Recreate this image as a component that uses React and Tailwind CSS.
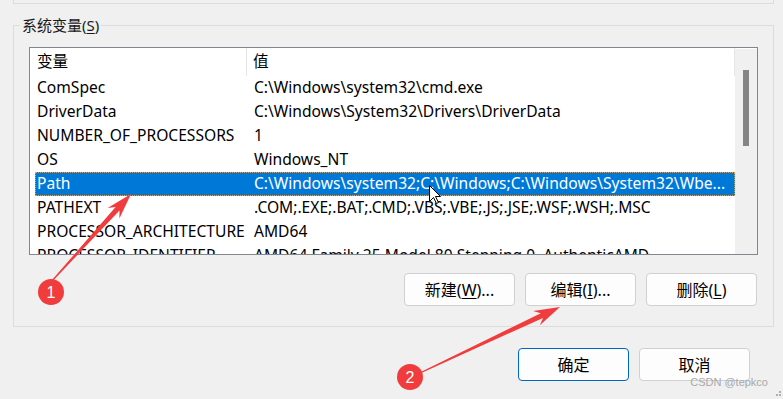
import React from 'react';

const rows = [
  { name: 'ComSpec', value: 'C:\\Windows\\system32\\cmd.exe' },
  { name: 'DriverData', value: 'C:\\Windows\\System32\\Drivers\\DriverData' },
  { name: 'NUMBER_OF_PROCESSORS', value: '1' },
  { name: 'OS', value: 'Windows_NT' },
  { name: 'Path', value: 'C:\\Windows\\system32;C:\\Windows;C:\\Windows\\System32\\Wbe...', selected: true },
  { name: 'PATHEXT', value: '.COM;.EXE;.BAT;.CMD;.VBS;.VBE;.JS;.JSE;.WSF;.WSH;.MSC' },
  { name: 'PROCESSOR_ARCHITECTURE', value: 'AMD64' },
  { name: 'PROCESSOR_IDENTIFIER', value: 'AMD64 Family 25 Model 80 Stepping 0, AuthenticAMD' },
];

const font = "font-['Noto_Sans','Noto_Sans_CJK_SC',sans-serif]";

// tapered annotation arrow, from tail to tip
function arrowPoints(x1, y1, x2, y2) {
  const dx = x2 - x1;
  const dy = y2 - y1;
  const len = Math.hypot(dx, dy);
  const ux = dx / len;
  const uy = dy / len;
  const nx = -uy;
  const ny = ux;
  const b = 20;
  const w = 26;
  const p = (x, y) => `${x.toFixed(1)},${y.toFixed(1)}`;
  return [
    p(x1 + nx * 0.6, y1 + ny * 0.6),
    p(x2 - ux * b + nx * 2.6, y2 - uy * b + ny * 2.6),
    p(x2 - ux * w + nx * 8, y2 - uy * w + ny * 8),
    p(x2, y2),
    p(x2 - ux * w - nx * 8, y2 - uy * w - ny * 8),
    p(x2 - ux * b - nx * 2.6, y2 - uy * b - ny * 2.6),
    p(x1 - nx * 0.6, y1 - ny * 0.6),
  ].join(' ');
}

function Btn({ label, hot, rest, primary }) {
  return (
    <button
      className={
        primary
          ? 'w-[111px] h-[33px] rounded-[4px] border border-[#0067c0] bg-[#fdfdfd] text-[16px] text-black'
          : 'w-[111px] h-[33px] rounded-[4px] border border-[#d0d0d0] bg-[#fdfdfd] text-[16px] text-black'
      }
    >
      {label}
      {hot && (
        <>
          (<span className="underline underline-offset-2">{hot}</span>){rest}
        </>
      )}
    </button>
  );
}

export default function App() {
  return (
    <div className={`relative w-[783px] h-[399px] overflow-hidden bg-[#f0f0f0] text-black ${font}`}>
      {/* end of the group box above */}
      <div className="ml-[13px] w-[761px] h-[4px] border-x border-b border-[#dcdcdc]" />

      <fieldset className="ml-[13px] mt-[13px] w-[761px] border border-[#dcdcdc] pb-[20px]">
        <legend className="ml-[6px] px-[2px] text-[15px] leading-4 text-[#1a1a1a]">
          系统变量(<span className="underline underline-offset-2">S</span>)
        </legend>

        <div className="ml-[15px] mt-[14px] w-[729px] h-[208px] border border-[#82878f] bg-white flex overflow-hidden">
          <div className="ml-[5px] w-[700px] text-[15.6px]">
            <div className="flex h-[28px] items-center">
              <div className="w-[212px] h-full pl-[2px] flex items-center border-r border-[#e5e5e5]">变量</div>
              <div className="flex-1 h-full pl-[6px] flex items-center border-r border-[#e5e5e5]">值</div>
            </div>
            {rows.map((r) => (
              <div
                key={r.name}
                className={
                  r.selected
                    ? 'flex h-[24px] items-center bg-[#0078d7] text-white outline outline-1 outline-dotted outline-[#e8a040] -outline-offset-1'
                    : 'flex h-[24px] items-center'
                }
              >
                <div className="w-[217px] pl-[2px] whitespace-nowrap overflow-hidden">{r.name}</div>
                <div className="flex-1 pl-[2px] whitespace-nowrap overflow-hidden">{r.value}</div>
              </div>
            ))}
          </div>
          <div className="w-[22px] mt-[1px] bg-[#f0f0f0] flex justify-center">
            <div className="mt-[21px] w-[6px] h-[76px] bg-[#858585]" />
          </div>
        </div>

        <div className="mt-[18px] ml-[390px] flex gap-[10px]">
          <Btn label="新建" hot="W" rest="..." />
          <Btn label="编辑" hot="I" rest="..." />
          <Btn label="删除" hot="L" rest="" />
        </div>
      </fieldset>

      <div className="mt-[21px] ml-[518px] flex gap-[10px]">
        <Btn label="确定" primary />
        <Btn label="取消" />
      </div>

      <div className="absolute right-[15px] bottom-[9px] text-[11px] leading-4 text-[#a8a8a8] font-['Liberation_Sans',sans-serif]">
        CSDN @tepkco
      </div>
      <div className="absolute right-[2px] bottom-[3px] grid grid-cols-2 gap-[1px]">
        <span className="w-[2px] h-[2px]" />
        <span className="w-[2px] h-[2px] bg-[#b0b0b0]" />
        <span className="w-[2px] h-[2px] bg-[#b0b0b0]" />
        <span className="w-[2px] h-[2px] bg-[#b0b0b0]" />
      </div>

      {/* annotations */}
      <svg className="absolute left-0 top-0" width="783" height="399">
        <polygon points={arrowPoints(51, 282, 131, 194)} fill="#f03c3c" />
        <polygon points={arrowPoints(420, 373, 560, 307)} fill="#f03c3c" />
        <circle cx="51" cy="292" r="13" fill="#f03c3c" />
        <circle cx="410" cy="377" r="13" fill="#f03c3c" />
        <text x="51" y="298" textAnchor="middle" fill="#fff" fontSize="16" fontFamily="Liberation Sans, sans-serif">1</text>
        <text x="410" y="383" textAnchor="middle" fill="#fff" fontSize="16" fontFamily="Liberation Sans, sans-serif">2</text>
        <path
          d="M429.5 185.5 L429.5 201.5 L433.5 197.5 L436.5 203.5 L438.5 202.5 L435.5 196.5 L440.5 196.5 Z"
          fill="#fff"
          stroke="#000"
          strokeWidth="1"
          strokeLinejoin="round"
        />
      </svg>
    </div>
  );
}
